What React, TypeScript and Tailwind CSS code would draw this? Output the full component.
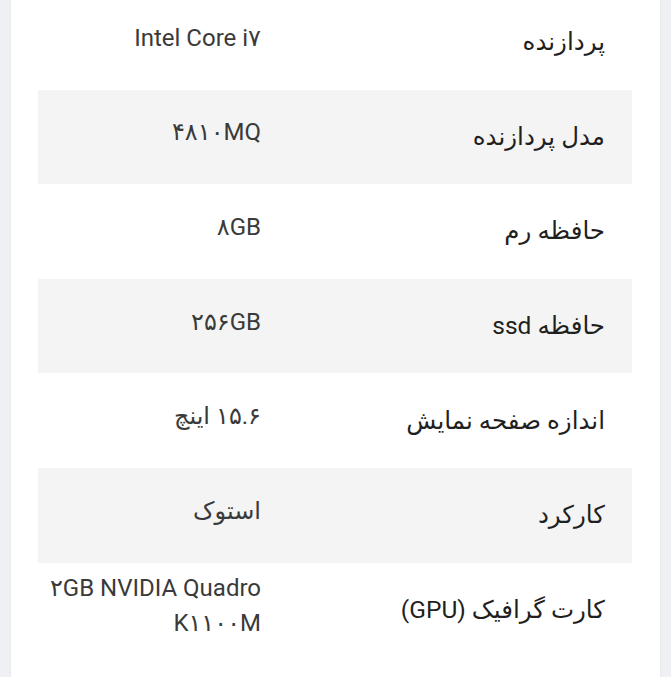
const specs = [
  { label: "پردازنده", value: "Intel Core i۷" },
  { label: "مدل پردازنده", value: "۴۸۱۰MQ" },
  { label: "حافظه رم", value: "۸GB" },
  { label: "حافظه ssd", value: "۲۵۶GB" },
  { label: "اندازه صفحه نمایش", value: "۱۵.۶ اینچ" },
  { label: "کارکرد", value: "استوک" },
  { label: "کارت گرافیک (GPU)", value: "۲GB NVIDIA Quadro K۱۱۰۰M" },
];

const App = () => {
  return (
    <div className="h-[677px] bg-[#eef0f3] px-[11px] overflow-hidden">
      <div
        dir="rtl"
        className="bg-white min-h-[720px] pr-[28px] pl-[27px] shadow-[0_0_3px_rgba(0,0,0,0.06)] font-['Roboto','DejaVu_Sans',sans-serif]"
      >
        {/* spec table, scrolled a little past its top */}
        <div className="-mt-[5px]">
          {specs.map((spec, index) => (
            <div
              key={index}
              className={`grid grid-cols-[345px_1fr] items-center min-h-[94.6px] ${
                index % 2 === 1 ? "bg-[#f4f4f4]" : "bg-white"
              }`}
            >
              <div className="pr-[27px] text-[24.5px] leading-[36px] text-[#1f1f1f]">
                {spec.label}
              </div>
              <div className="pr-[26px] pl-[8px] -mt-[8px] text-[24px] leading-[35px] text-[#3a3a3a]">
                {spec.value}
              </div>
            </div>
          ))}
        </div>
      </div>
    </div>
  );
};

export default App;
